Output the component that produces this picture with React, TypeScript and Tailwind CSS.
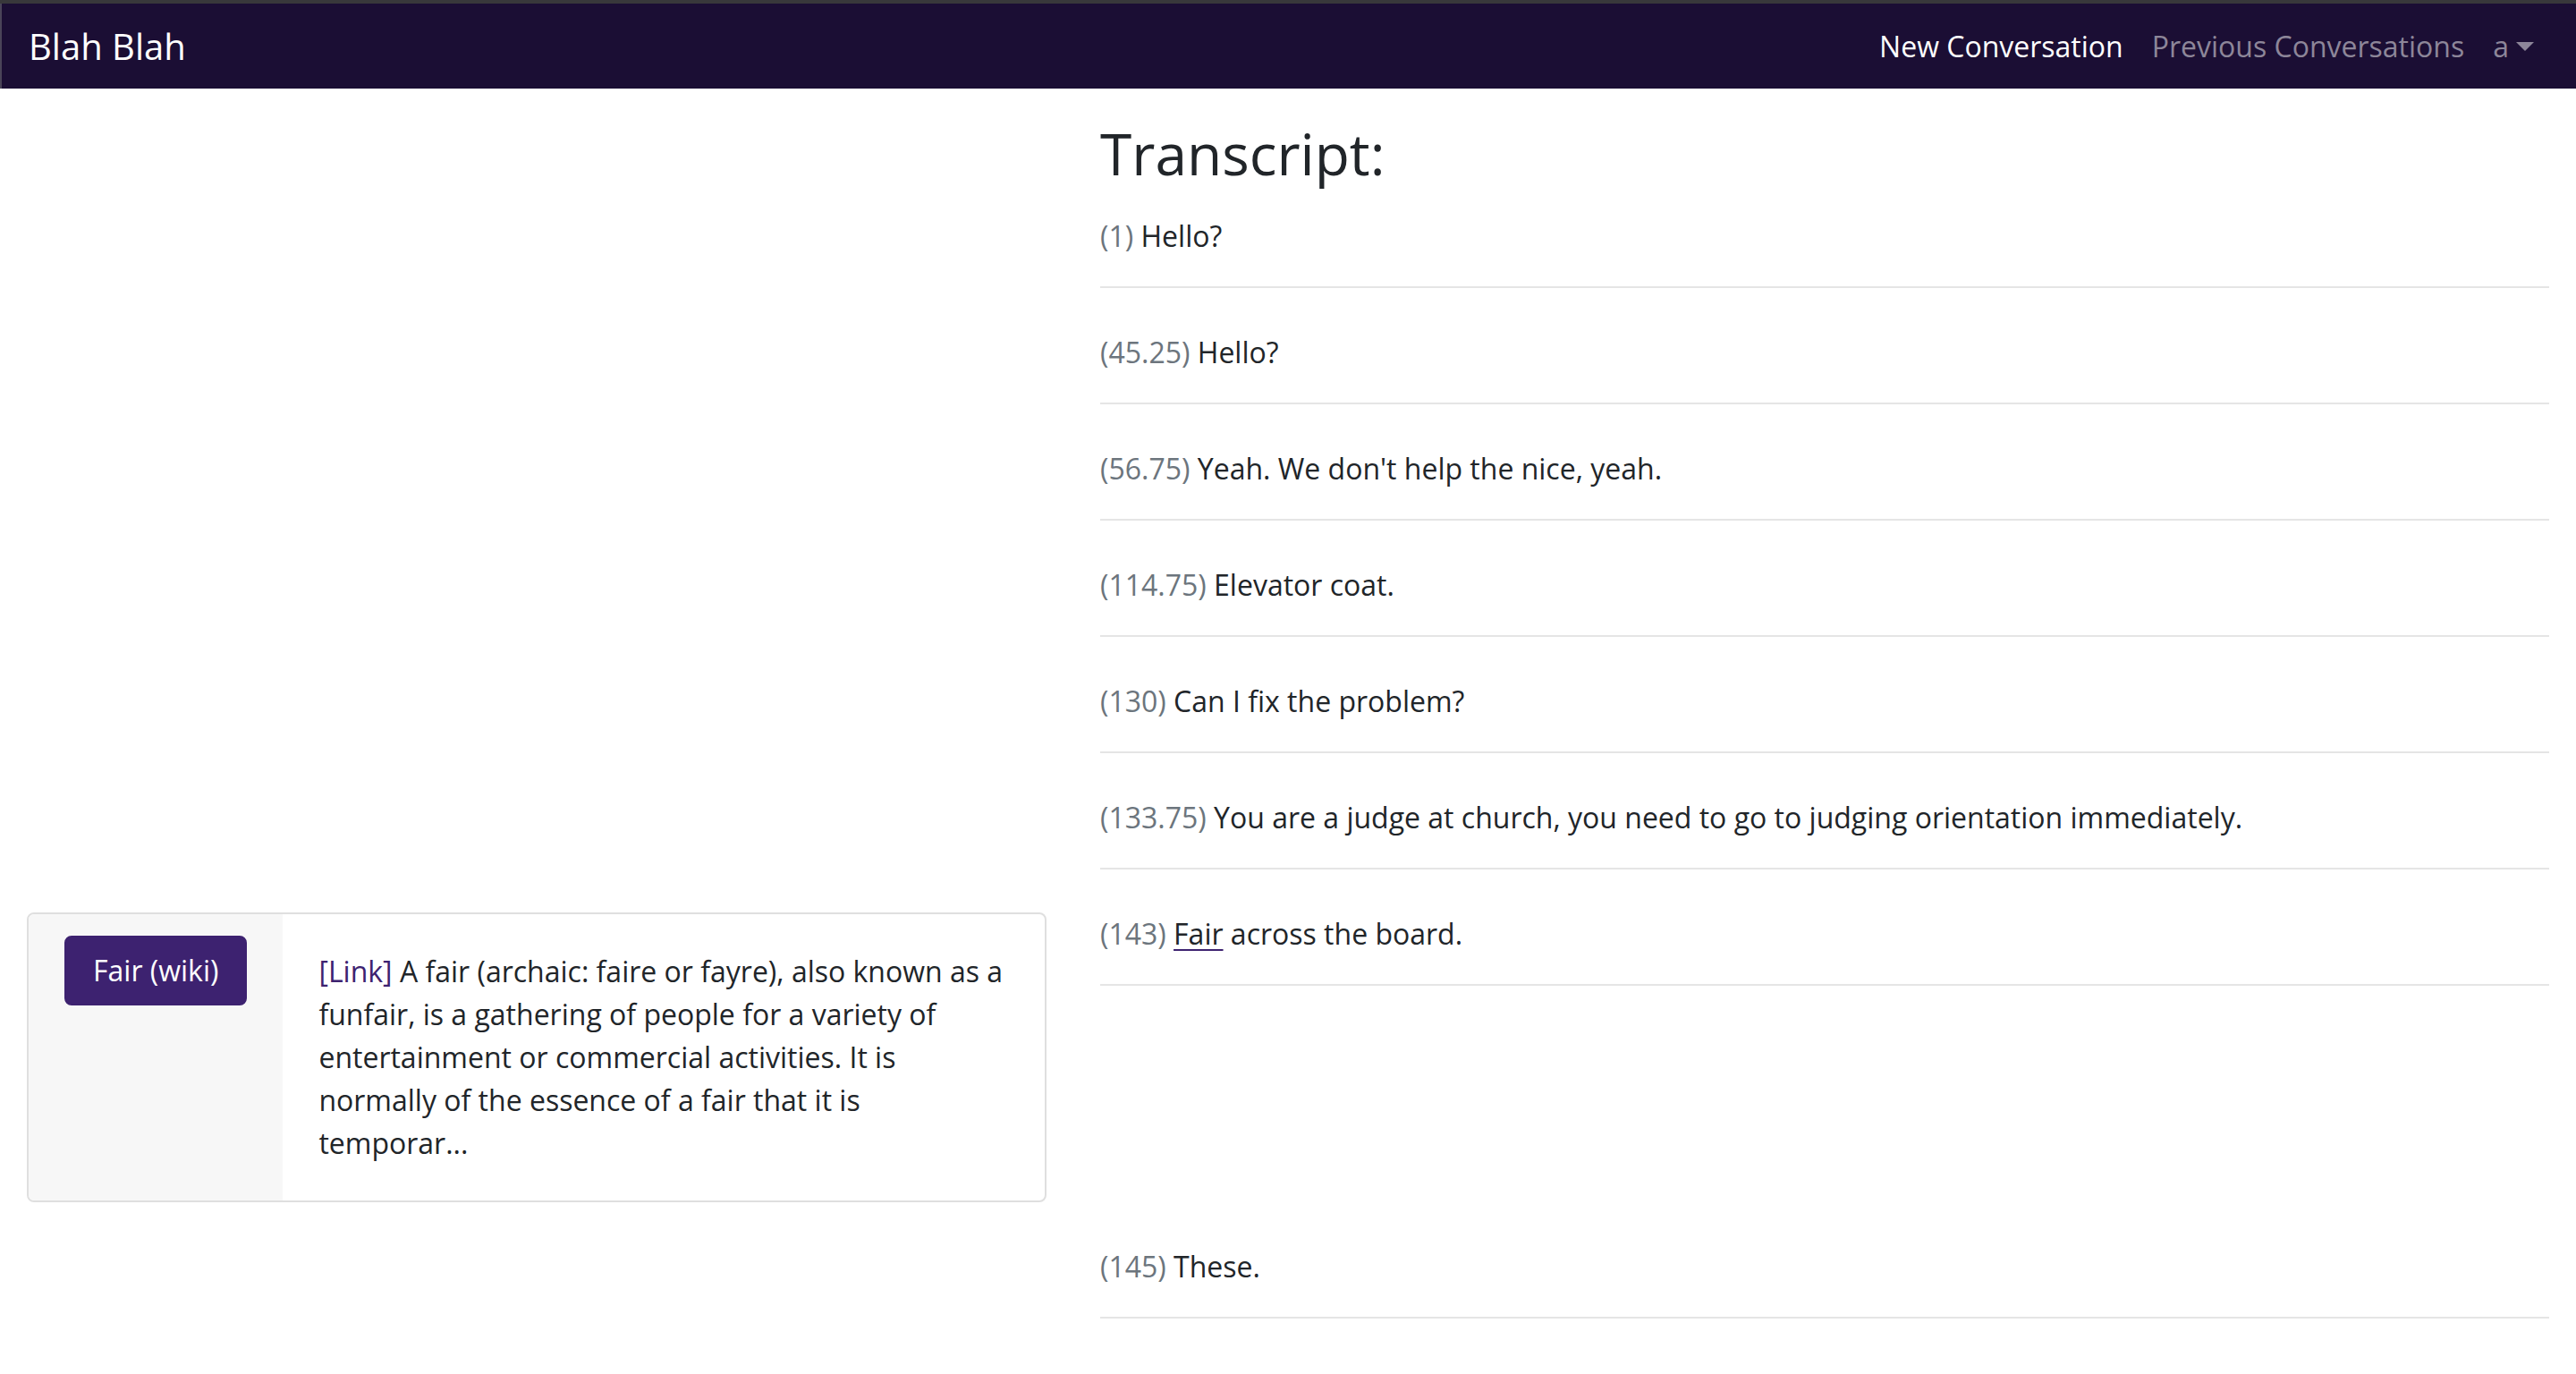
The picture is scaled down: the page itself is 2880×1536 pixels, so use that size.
import React from 'react';

type Line = { t: string; text: React.ReactNode; card?: boolean };

const lines: Line[] = [
  { t: '1', text: 'Hello?' },
  { t: '45.25', text: 'Hello?' },
  { t: '56.75', text: "Yeah. We don't help the nice, yeah." },
  { t: '114.75', text: 'Elevator coat.' },
  { t: '130', text: 'Can I fix the problem?' },
  { t: '133.75', text: 'You are a judge at church, you need to go to judging orientation immediately.' },
  {
    t: '143',
    text: (
      <>
        <span className="underline decoration-[#3d2270] decoration-2 underline-offset-[5px]">Fair</span> across the board.
      </>
    ),
    card: true,
  },
  { t: '145', text: 'These.' },
];

const WikiCard = () => (
  <div className="flex border-2 border-[#dfdfdf] rounded-[8px] overflow-hidden">
    <div className="bg-[#f7f7f7] px-[40px] pt-[24px] shrink-0">
      <button className="bg-[#3d2270] border-2 border-[#3d2270] text-white text-[32px] leading-[48px] px-[30px] py-[13px] rounded-[8px] whitespace-nowrap">
        Fair (wiki)
      </button>
    </div>
    <div className="flex-1 px-[40px] py-[40px] text-[32px] leading-[48px]">
      <a className="text-[#3d2270]">[Link]</a> A fair (archaic: faire or fayre), also known as a funfair, is a gathering of people for a
      variety of entertainment or commercial activities. It is normally of the essence of a fair that it is temporar...
    </div>
  </div>
);

export default function App() {
  return (
    <div className="min-h-screen bg-white font-['Open_Sans',sans-serif] text-[#212529]">
      <div className="h-[4px] bg-[#38383b]" />
      <nav className="h-[95px] bg-[#1b0e34] flex items-center justify-between pl-[30px] pr-[47px] border-l-2 border-[#4a4458]">
        <span className="text-[40px] leading-[60px] text-white">Blah Blah</span>
        <div className="flex items-center text-[32px] leading-[48px]">
          <a className="px-[16px] text-white">New Conversation</a>
          <a className="px-[16px] text-[#8d8699]">Previous Conversations</a>
          <a className="pl-[16px] text-[#8d8699] flex items-center">
            a
            <span className="ml-[8px] w-0 h-0 border-x-[10px] border-t-[10px] border-x-transparent border-t-[#8d8699]" />
          </a>
        </div>
      </nav>

      <main className="px-[30px] pt-[34px]">
        <div className="flex gap-[60px]">
          <div className="w-[1140px] shrink-0" />
          <h2 className="flex-1 text-[64px] leading-[77px] font-normal mb-[30px]">Transcript:</h2>
        </div>

        <div className="flex flex-col gap-[48px]">
          {lines.map((l) => (
            <div key={l.t} className="flex gap-[60px] items-start">
              <div className="w-[1140px] shrink-0">{l.card && <WikiCard />}</div>
              <div className="flex-1">
                <p className="text-[32px] leading-[48px] mb-[32px]">
                  <span className="text-[#6c757d]">({l.t})</span> {l.text}
                </p>
                <div className="border-t-2 border-[#e5e5e5]" />
              </div>
            </div>
          ))}
        </div>
      </main>
    </div>
  );
}
